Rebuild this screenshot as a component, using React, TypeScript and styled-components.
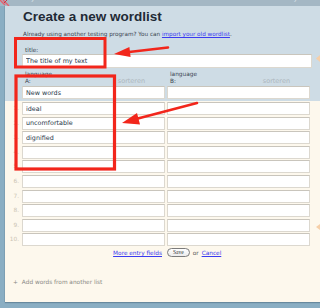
import React from 'react';
import styled, { createGlobalStyle } from 'styled-components';

const GlobalStyle = createGlobalStyle`
  html, body {
    margin: 0;
    padding: 0;
    background: #8db0c5;
  }
  body {
    font-family: "DejaVu Sans", Verdana, sans-serif;
  }
`;

const Page = styled.div`
  position: relative;
  width: 320px;
  height: 308px;
  overflow: hidden;
  display: flex;
  flex-direction: column;
  background: #8aaec3;
`;

const TopBar = styled.div`
  height: 6px;
  box-sizing: border-box;
  padding: 0 0 4px 0;
  display: flex;
  align-items: flex-end;
  justify-content: space-between;
  overflow: hidden;
  background: #a4b7c4;
`;

const Logo = styled.svg`
  width: 12px;
  height: 6px;
  flex: none;
  align-self: flex-start;
`;

const TabLabel = styled.span<{ $right?: boolean }>`
  font-size: 7px;
  line-height: 7px;
  color: #e4ecf1;
  margin-left: ${({ $right }) => ($right ? 'auto' : '13px')};
  margin-right: ${({ $right }) => ($right ? '-8px' : '0')};
  white-space: nowrap;
`;

const Panel = styled.div`
  flex: 1;
  margin: 0 0 6px 5px;
  display: flex;
  flex-direction: column;
  background: #fdf8ed;
  box-shadow: -1px 0 0 #7d9fb3, 0 1px 1px rgba(40, 70, 90, 0.35);
`;

const Header = styled.div`
  background: #cedce5;
  padding: 3px 0 2px 17px;
`;

const Title = styled.h1`
  margin: 0 0 0 1px;
  font-family: "Liberation Sans", Arial, sans-serif;
  font-weight: bold;
  font-size: 13.5px;
  line-height: 16px;
  color: #1f2a36;
`;

const Intro = styled.p`
  margin: 5px 0 0 1px;
  font-size: 5.7px;
  line-height: 8px;
  color: #3a4450;
`;

const Link = styled.a`
  color: #3a3af0;
  text-decoration: underline;
  cursor: pointer;
`;

const FieldLabel = styled.div`
  font-size: 5.8px;
  line-height: 7px;
  color: #3c4652;
  padding-left: 3px;
`;

const TitleLabel = styled(FieldLabel)`
  margin-top: 9px;
`;

const TextInput = styled.input<{ $wide?: boolean }>`
  display: block;
  box-sizing: border-box;
  width: ${({ $wide }) => ($wide ? '290px' : '143px')};
  height: ${({ $wide }) => ($wide ? '14px' : '13px')};
  margin: 0;
  padding: 0 3px;
  border: 1px solid #dcd8cf;
  border-top-color: #c9c5bc;
  background: #fff;
  font-family: "DejaVu Sans", Verdana, sans-serif;
  font-size: 6.4px;
  color: #27364a;
  outline: none;
`;

const ColumnGrid = styled.div`
  display: grid;
  grid-template-columns: 143px 143px;
  column-gap: 2px;
  margin-top: 3px;
`;

const LangHead = styled.div`
  display: flex;
  flex-direction: column;
`;

const LangLine = styled.div`
  display: flex;
  justify-content: space-between;
  align-items: baseline;
  padding-right: 20px;
`;

const SortLink = styled.span`
  font-size: 6.5px;
  line-height: 7px;
  color: #adb6bd;
`;

const HeadRow = styled.div`
  display: grid;
  grid-template-columns: 143px 143px;
  column-gap: 2px;
  margin-top: 1px;
`;

const Rows = styled.div`
  display: grid;
  grid-template-columns: 17px 143px 143px;
  column-gap: 2px;
  row-gap: 1.6px;
  padding-top: 1px;
  margin-left: -2px;
`;

const RowNum = styled.span`
  font-size: 5.8px;
  line-height: 13px;
  text-align: right;
  color: #cbc4b4;
  padding-right: 1px;
`;

const Actions = styled.div`
  display: grid;
  grid-template-columns: 145px 143px;
  column-gap: 2px;
  margin: 2px 0 0 15px;
  align-items: center;
`;

const MoreLink = styled(Link)`
  justify-self: end;
  font-size: 5.8px;
  margin-right: 3px;
`;

const SaveLine = styled.div`
  display: flex;
  align-items: center;
  gap: 3px;
  font-size: 5.8px;
  color: #555;
`;

const SaveButton = styled.button`
  height: 9px;
  padding: 0 5px;
  border: 1px solid #7b7b7b;
  border-radius: 5px;
  background: linear-gradient(#ffffff, #ececec);
  font-family: "Liberation Serif", serif;
  font-size: 5.5px;
  line-height: 7px;
  color: #333;
`;

const AddWords = styled.div`
  display: flex;
  align-items: center;
  gap: 4px;
  margin: 22px 0 0 8px;
  font-size: 5.8px;
  color: #8a8a86;
`;

const Overlay = styled.svg`
  position: absolute;
  inset: 0;
  pointer-events: none;
`;

const rows = ['ideal', 'uncomfortable', 'dignified', '', '', '', '', '', '', ''];

export default function App() {
  return (
    <>
      <GlobalStyle />
      <Page>
        <TopBar>
          <Logo viewBox="0 0 12 6">
            <path d="M0 0 L5 5 M3 0 L9 6" stroke="#e4606e" strokeWidth="1.4" fill="none" />
            <path d="M7 0 L4 3" stroke="#c0394a" strokeWidth="1" fill="none" />
          </Logo>
          <TabLabel>My wordlists</TabLabel>
          <TabLabel $right>My account</TabLabel>
        </TopBar>
        <Panel>
          <Header>
            <Title>Create a new wordlist</Title>
            <Intro>
              Already using another testing program? You can <Link>import your old wordlist</Link>.
            </Intro>
            <TitleLabel>title:</TitleLabel>
            <TextInput $wide defaultValue="The title of my text" />
            <ColumnGrid>
              <LangHead>
                <FieldLabel>language</FieldLabel>
                <LangLine>
                  <FieldLabel>A:</FieldLabel>
                  <SortLink>sorteren</SortLink>
                </LangLine>
              </LangHead>
              <LangHead>
                <FieldLabel>language</FieldLabel>
                <LangLine>
                  <FieldLabel>B:</FieldLabel>
                  <SortLink>sorteren</SortLink>
                </LangLine>
              </LangHead>
            </ColumnGrid>
            <HeadRow>
              <TextInput defaultValue="New words" />
              <TextInput />
            </HeadRow>
          </Header>
          <Rows>
            {rows.map((word, i) => (
              <React.Fragment key={i}>
                <RowNum>{i + 1}.</RowNum>
                <TextInput defaultValue={word} />
                <TextInput />
              </React.Fragment>
            ))}
          </Rows>
          <Actions>
            <MoreLink>More entry fields</MoreLink>
            <SaveLine>
              <SaveButton>Save</SaveButton>
              or <Link>Cancel</Link>
            </SaveLine>
          </Actions>
          <AddWords>
            <span>+</span>
            Add words from another list
          </AddWords>
        </Panel>
        <Overlay viewBox="0 0 320 308" width="320" height="308">
          <path d="M320 55 L316 58.5 L320 62 Z" fill="#f6cfa8" />
          <path d="M320 224 L316 227 L320 230 Z" fill="#f6cfa8" />
          <rect x="15.5" y="38.5" width="89.5" height="28.5" fill="none" stroke="#f2261b" strokeWidth="3" />
          <rect x="16" y="76" width="98.5" height="93" fill="none" stroke="#f2261b" strokeWidth="3.2" />
          <path d="M168 47.5 L129 52" stroke="#f2261b" strokeWidth="2.6" strokeLinecap="round" />
          <path d="M114 54 L130.6 57 L129.4 47 Z" fill="#f2261b" />
          <path d="M197 103 L136 119" stroke="#f2261b" strokeWidth="2.6" strokeLinecap="round" />
          <path d="M122 123 L140 124.5 L137 112.9 Z" fill="#f2261b" />
        </Overlay>
      </Page>
    </>
  );
}
